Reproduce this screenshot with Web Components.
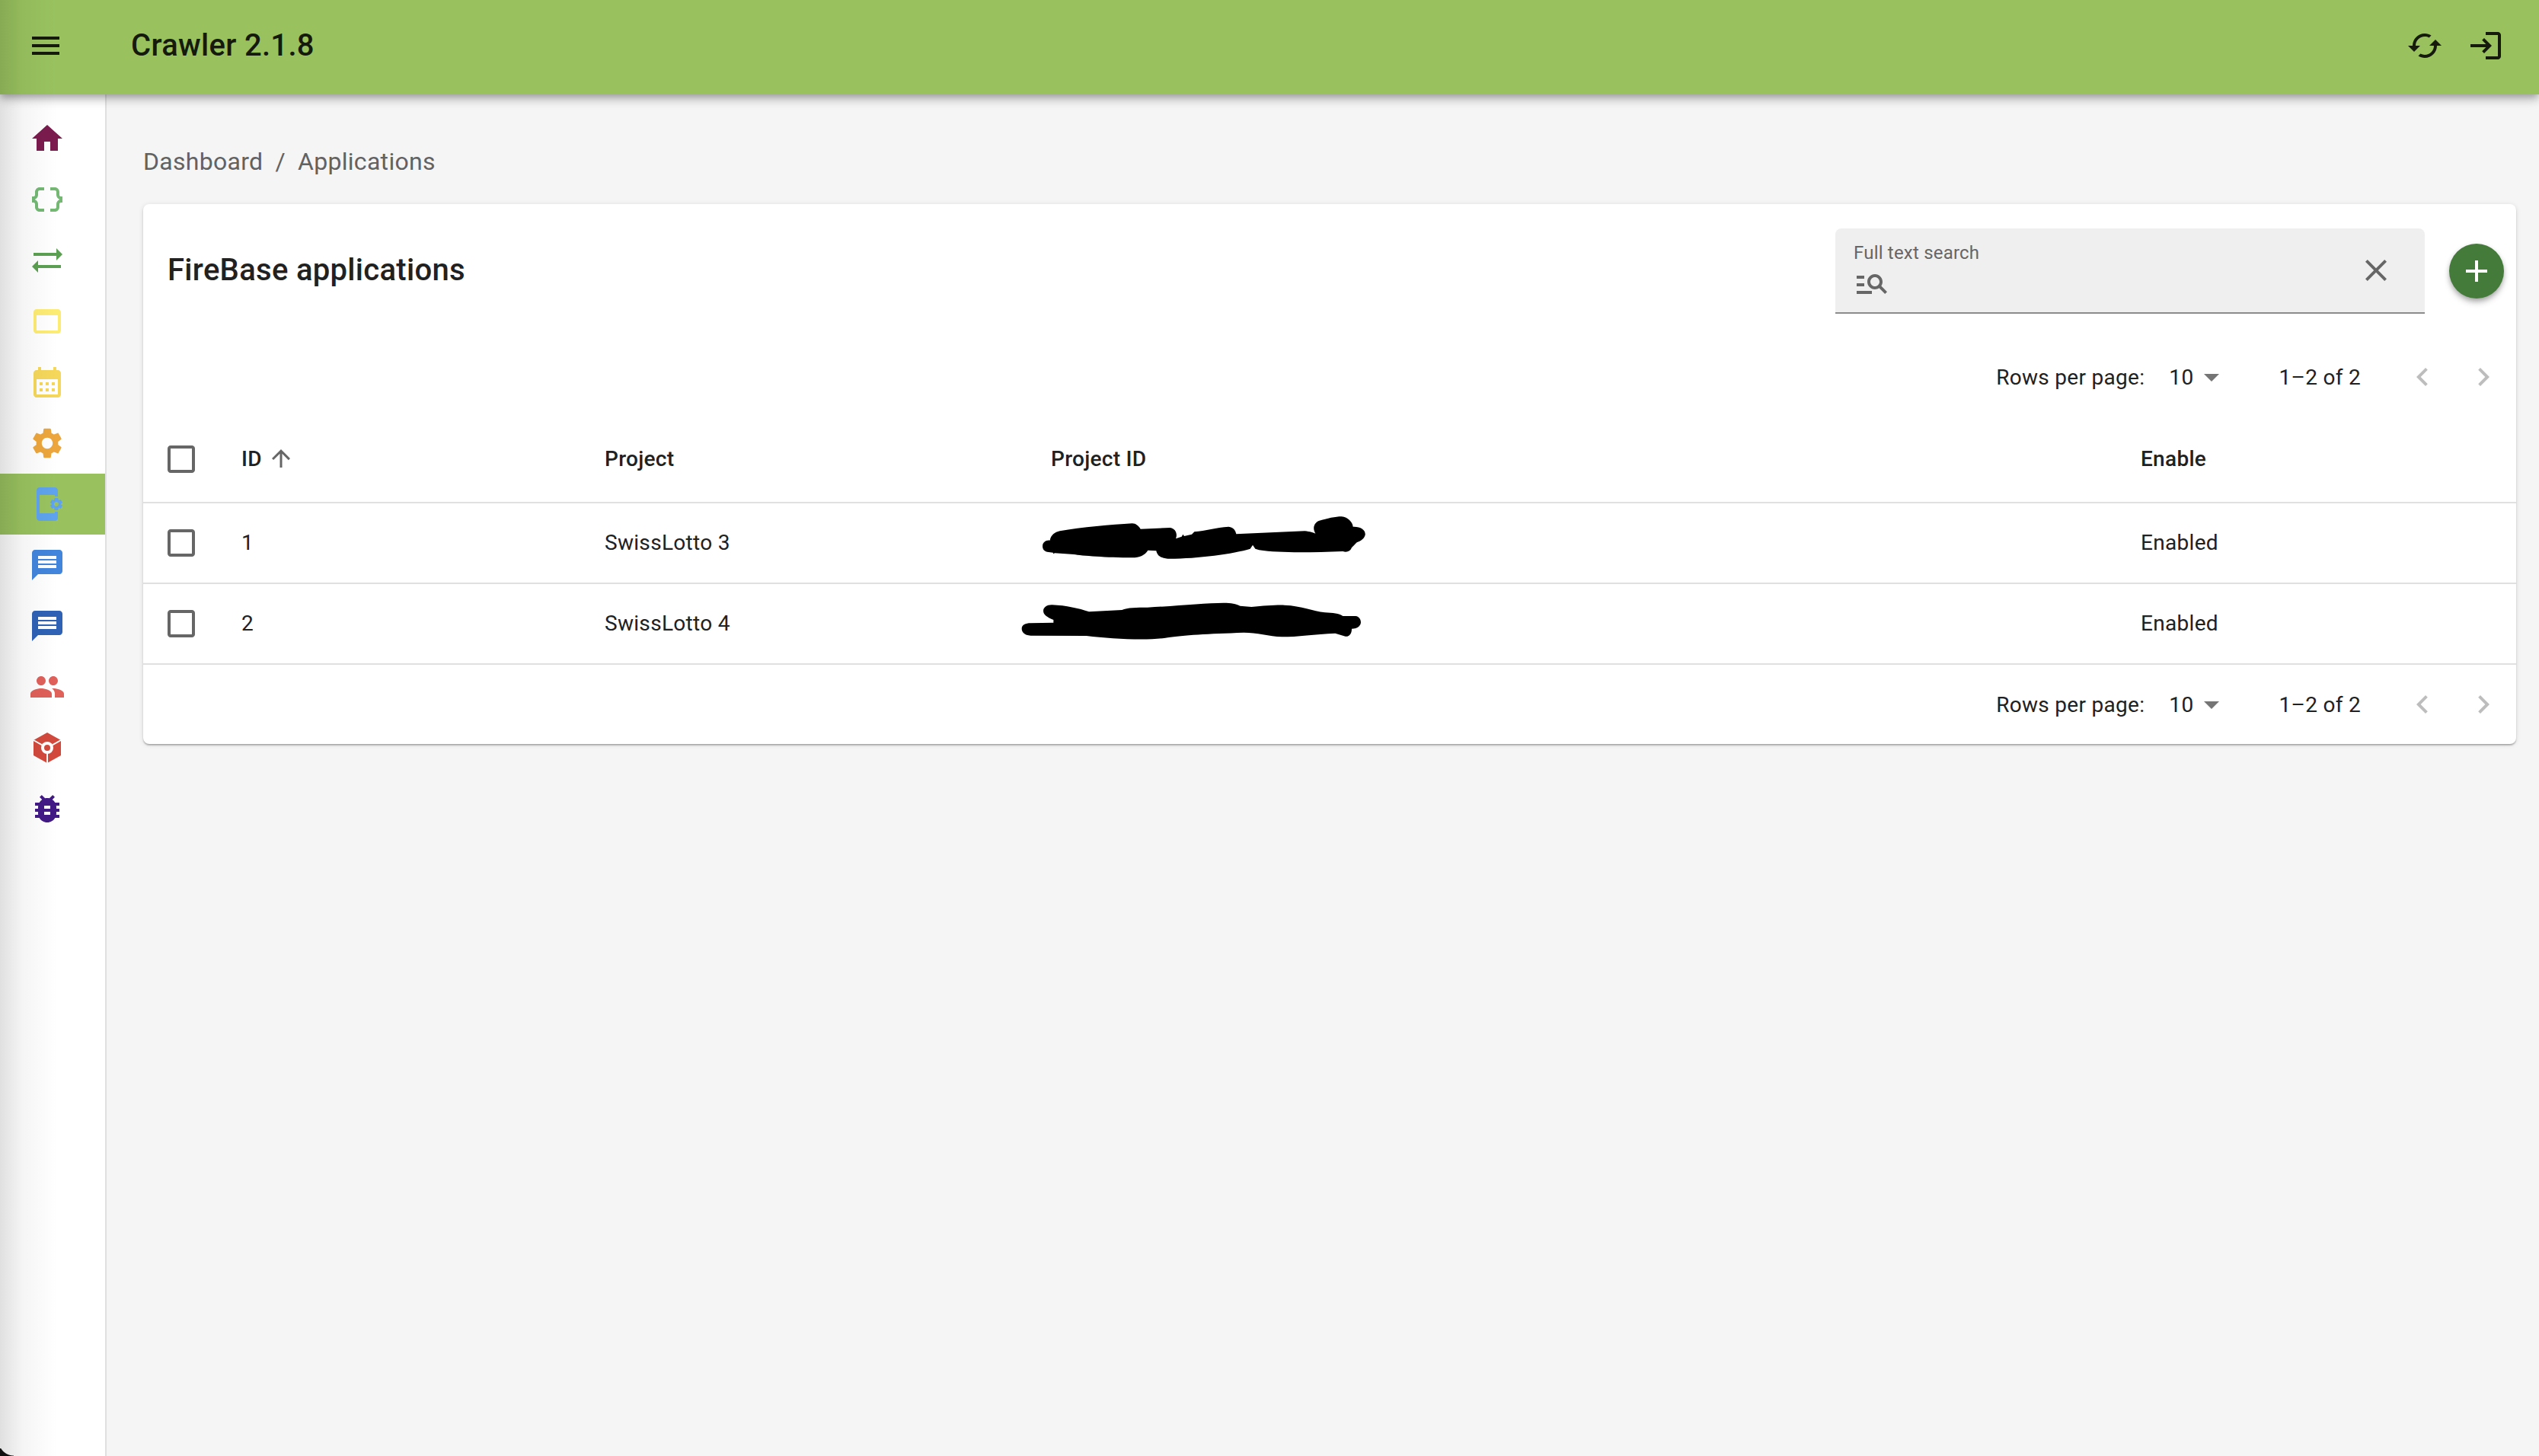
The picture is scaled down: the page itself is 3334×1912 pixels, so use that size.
<!DOCTYPE html>
<html lang="en">
<head>
<meta charset="utf-8">
<title>Crawler</title>
<style>
  html, body { margin: 0; height: 100%; background: #f5f5f5; }
  body { overflow: hidden; font-family: Roboto, "Liberation Sans", sans-serif; }
</style>
</head>
<body>
<crawler-app></crawler-app>
<script>
const ICONS = {
  menu: "M3 18h18v-2H3v2zm0-5h18v-2H3v2zm0-7v2h18V6H3z",
  cached: "m19 8-4 4h3c0 3.31-2.69 6-6 6-1.01 0-1.97-.25-2.8-.7l-1.46 1.46C8.97 19.54 10.43 20 12 20c4.42 0 8-3.58 8-8h3l-4-4zM6 12c0-3.31 2.69-6 6-6 1.01 0 1.97.25 2.8.7l1.46-1.46C15.03 4.46 13.57 4 12 4c-4.42 0-8 3.58-8 8H1l4 4 4-4H6z",
  login: "M11 7 9.6 8.4l2.6 2.6H2v2h10.2l-2.6 2.6L11 17l5-5-5-5zm9 12h-8v2h8c1.1 0 2-.9 2-2V5c0-1.1-.9-2-2-2h-8v2h8v14z",
  home: "M10 20v-6h4v6h5v-8h3L12 3 2 12h3v8z",
  braces: "M4 7v2c0 .55-.45 1-1 1H2v4h1c.55 0 1 .45 1 1v2c0 1.65 1.35 3 3 3h3v-2H7c-.55 0-1-.45-1-1v-2c0-1.3-.84-2.42-2-2.83v-.34C5.16 11.42 6 10.3 6 9V7c0-.55.45-1 1-1h3V4H7C5.35 4 4 5.35 4 7zm17 3c-.55 0-1-.45-1-1V7c0-1.65-1.35-3-3-3h-3v2h3c.55 0 1 .45 1 1v2c0 1.3.84 2.42 2 2.83v.34c-1.16.41-2 1.52-2 2.83v2c0 .55-.45 1-1 1h-3v2h3c1.65 0 3-1.35 3-3v-2c0-.55.45-1 1-1h1v-4h-1z",
  swap: "M22 8l-4-4v3H3v2h15v3l4-4zM2 16l4 4v-3h15v-2H6v-3l-4 4z",
  web: "M19 4H5c-1.11 0-2 .9-2 2v12c0 1.1.89 2 2 2h14c1.1 0 2-.9 2-2V6c0-1.1-.89-2-2-2zm0 14H5V8h14v10z",
  calendar: "M19 4h-1V2h-2v2H8V2H6v2H5c-1.1 0-2 .9-2 2v14c0 1.1.9 2 2 2h14c1.1 0 2-.9 2-2V6c0-1.1-.9-2-2-2zm0 16H5V10h14v10zM7 12h2v2H7zm4 0h2v2h-2zm4 0h2v2h-2zM7 16h2v2H7zm4 0h2v2h-2zm4 0h2v2h-2z",
  settings: "M19.14 12.94c.04-.3.06-.61.06-.94 0-.32-.02-.64-.07-.94l2.03-1.58c.18-.14.23-.41.12-.61l-1.92-3.32c-.12-.22-.37-.29-.59-.22l-2.39.96c-.5-.38-1.03-.7-1.62-.94l-.36-2.54c-.04-.24-.24-.41-.48-.41h-3.84c-.24 0-.43.17-.47.41l-.36 2.54c-.59.24-1.13.57-1.62.94l-2.39-.96c-.22-.08-.47 0-.59.22L2.74 8.87c-.12.21-.08.47.12.61l2.03 1.58c-.05.3-.09.63-.09.94s.02.64.07.94l-2.03 1.58c-.18.14-.23.41-.12.61l1.92 3.32c.12.22.37.29.59.22l2.39-.96c.5.38 1.03.7 1.62.94l.36 2.54c.05.24.24.41.48.41h3.84c.24 0 .44-.17.47-.41l.36-2.54c.59-.24 1.13-.56 1.62-.94l2.39.96c.22.08.47 0 .59-.22l1.92-3.32c.12-.22.07-.47-.12-.61l-2.01-1.58zM12 15.6c-1.98 0-3.6-1.62-3.6-3.6s1.62-3.6 3.6-3.6 3.6 1.62 3.6 3.6-1.62 3.6-3.6 3.6z",
  appsettings: "M21.81 12.74l-.82-.63v-.22l.8-.63c.16-.12.2-.34.1-.51l-.85-1.48c-.07-.13-.21-.2-.35-.2-.05 0-.1.01-.15.03l-.95.38c-.08-.05-.11-.07-.19-.11l-.15-1.01c-.03-.21-.2-.36-.4-.36h-1.71c-.2 0-.37.15-.4.34l-.14 1.01c-.03.02-.07.03-.1.05l-.09.06-.95-.38c-.05-.02-.1-.03-.15-.03-.14 0-.27.07-.35.2l-.85 1.48c-.1.17-.06.39.1.51l.8.63v.23l-.8.63c-.16.12-.2.34-.1.51l.85 1.48c.07.13.21.2.35.2.05 0 .1-.01.15-.03l.95-.37c.08.05.12.07.2.11l.15 1.01c.03.2.2.34.4.34h1.71c.2 0 .37-.15.4-.34l.15-1.01c.03-.02.07-.03.1-.05l.09-.06.95.38c.05.02.1.03.15.03.14 0 .27-.07.35-.2l.85-1.48c.1-.17.06-.39-.1-.51zM18 13.5c-.83 0-1.5-.67-1.5-1.5s.67-1.5 1.5-1.5 1.5.67 1.5 1.5-.67 1.5-1.5 1.5zM17 18H7V6h10v1h2V3c0-1.1-.9-2-2-2H7c-1.1 0-2 .9-2 2v18c0 1.1.9 2 2 2h10c1.1 0 2-.9 2-2v-4h-2v1z",
  message: "M20 2H4c-1.1 0-1.99.9-1.99 2L2 22l4-4h14c1.1 0 2-.9 2-2V4c0-1.1-.9-2-2-2zm-2 12H6v-2h12v2zm0-3H6V9h12v2zm0-3H6V6h12v2z",
  people: "M16 11c1.66 0 2.99-1.34 2.99-3S17.66 5 16 5c-1.66 0-3 1.34-3 3s1.34 3 3 3zm-8 0c1.66 0 2.99-1.34 2.99-3S9.66 5 8 5C6.34 5 5 6.34 5 8s1.34 3 3 3zm0 2c-2.33 0-7 1.17-7 3.5V19h14v-2.5c0-2.33-4.67-3.5-7-3.5zm8 0c-.29 0-.62.02-.97.05 1.16.84 1.97 1.97 1.97 3.45V19h6v-2.5c0-2.33-4.67-3.5-7-3.5z",
  bug: "M20 8h-2.81c-.45-.78-1.07-1.45-1.82-1.96L17 4.41 15.59 3l-2.17 2.17C12.96 5.06 12.49 5 12 5c-.49 0-.96.06-1.41.17L8.41 3 7 4.41l1.62 1.63C7.88 6.55 7.26 7.22 6.81 8H4v2h2.09c-.05.33-.09.66-.09 1v1H4v2h2v1c0 .34.04.67.09 1H4v2h2.81c1.04 1.79 2.97 3 5.19 3s4.15-1.21 5.19-3H20v-2h-2.09c.05-.33.09-.66.09-1v-1h2v-2h-2v-1c0-.34-.04-.67-.09-1H20V8zm-6 8h-4v-2h4v2zm0-4h-4v-2h4v2z",
  search: "M7 9H2V7h5v2zm0 3H2v2h5v-2zm13.59 7-3.83-3.83c-.8.52-1.74.83-2.76.83-2.76 0-5-2.24-5-5s2.24-5 5-5 5 2.24 5 5c0 1.02-.31 1.96-.83 2.75L22 17.59 20.59 19zM17 11c0-1.65-1.35-3-3-3s-3 1.35-3 3 1.35 3 3 3 3-1.35 3-3zM2 19h10v-2H2v2z",
  close: "M19 6.41 17.59 5 12 10.59 6.41 5 5 6.41 10.59 12 5 17.59 6.41 19 12 13.41 17.59 19 19 17.59 13.41 12z",
  add: "M19 13h-6v6h-2v-6H5v-2h6V5h2v6h6v2z",
  checkbox: "M19 5v14H5V5h14m0-2H5c-1.1 0-2 .9-2 2v14c0 1.1.9 2 2 2h14c1.1 0 2-.9 2-2V5c0-1.1-.9-2-2-2z",
  arrowup: "M4 12l1.41 1.41L11 7.83V20h2V7.83l5.58 5.59L20 12l-8-8-8 8z",
  dropdown: "M7 10l5 5 5-5z",
  prev: "M15.41 7.41 14 6l-6 6 6 6 1.41-1.41L10.83 12z",
  next: "M10 6 8.59 7.41 13.17 12l-4.58 4.59L10 18l6-6z",
};

customElements.define(
  "app-icon",
  class extends HTMLElement {
    constructor() {
      super();
      this.attachShadow({ mode: "open" });
    }

    connectedCallback() {
      const name = this.getAttribute("name");
      // the box icon has white spokes, so it is not a single path
      const inner =
        name === "cube"
          ? `<path fill="currentColor" d="M12 2l9 5v10l-9 5-9-5V7z"/>
             <path d="M3 7l9 5 9-5M12 12v10" stroke="#fff" fill="none"/>
             <circle cx="12" cy="12" r="4" fill="#fff"/>
             <circle cx="12" cy="12" r="2" fill="currentColor"/>`
          : `<path fill="currentColor" d="${ICONS[name]}"/>`;
      this.shadowRoot.innerHTML = `
        <style>
          :host {
            display: block;
            flex: none;
            width: var(--icon-size, 48px);
            height: var(--icon-size, 48px);
          }
          svg {
            display: block;
            width: 100%;
            height: 100%;
          }
        </style>
        <svg viewBox="0 0 24 24">${inner}</svg>
      `;
    }
  }
);

customElements.define(
  "app-bar",
  class extends HTMLElement {
    constructor() {
      super();
      this.attachShadow({ mode: "open" });
      this.shadowRoot.innerHTML = `
        <style>
          :host {
            display: flex;
            align-items: center;
            flex: none;
            position: relative;
            z-index: 2;
            box-sizing: border-box;
            height: 124px;
            padding: 0 30px 4px 36px;
            background: #99c25f;
            color: #151a0c;
            box-shadow: 0 4px 8px -2px rgba(0, 0, 0, 0.2),
              0 8px 10px 0 rgba(0, 0, 0, 0.14), 0 2px 20px 0 rgba(0, 0, 0, 0.12);
          }
          h1 {
            margin: 0 0 0 88px;
            flex: 1;
            font-size: 40px;
            font-weight: 500;
            line-height: 1.6;
            letter-spacing: 0.3px;
          }
          .actions {
            display: flex;
            gap: 32px;
            margin-right: 16px;
          }
        </style>
        <app-icon name="menu"></app-icon>
        <h1><slot></slot></h1>
        <div class="actions">
          <app-icon name="cached"></app-icon>
          <app-icon name="login"></app-icon>
        </div>
      `;
    }
  }
);

customElements.define(
  "nav-item",
  class extends HTMLElement {
    constructor() {
      super();
      this.attachShadow({ mode: "open" });
      this.shadowRoot.innerHTML = `
        <style>
          :host {
            display: flex;
            align-items: center;
            height: 80px;
            padding-left: 38px;
          }
          :host([active]) {
            background: #99c25f;
          }
        </style>
        <slot></slot>
      `;
    }
  }
);

customElements.define(
  "side-nav",
  class extends HTMLElement {
    constructor() {
      super();
      this.attachShadow({ mode: "open" });
      this.shadowRoot.innerHTML = `
        <style>
          :host {
            display: block;
            flex: none;
            box-sizing: border-box;
            width: 140px;
            padding-top: 18px;
            background: #fff;
            border-right: 2px solid #e0e0e0;
          }
        </style>
        <nav-item style="color:#7b1b4e"><app-icon name="home"></app-icon></nav-item>
        <nav-item style="color:#74b874"><app-icon name="braces"></app-icon></nav-item>
        <nav-item style="color:#5ba052"><app-icon name="swap"></app-icon></nav-item>
        <nav-item style="color:#fdec74"><app-icon name="web"></app-icon></nav-item>
        <nav-item style="color:#f5d75b"><app-icon name="calendar"></app-icon></nav-item>
        <nav-item style="color:#eda63d"><app-icon name="settings"></app-icon></nav-item>
        <nav-item active style="color:#5fa3ee"><app-icon name="appsettings"></app-icon></nav-item>
        <nav-item style="color:#4285dc"><app-icon name="message"></app-icon></nav-item>
        <nav-item style="color:#2f62b5"><app-icon name="message"></app-icon></nav-item>
        <nav-item style="color:#e0605a"><app-icon name="people"></app-icon></nav-item>
        <nav-item style="color:#d2493c"><app-icon name="cube"></app-icon></nav-item>
        <nav-item style="color:#421a85"><app-icon name="bug"></app-icon></nav-item>
      `;
    }
  }
);

customElements.define(
  "bread-crumbs",
  class extends HTMLElement {
    constructor() {
      super();
      this.attachShadow({ mode: "open" });
      this.shadowRoot.innerHTML = `
        <style>
          :host {
            display: flex;
            gap: 16px;
            align-items: center;
            height: 40px;
            margin-bottom: 36px;
            font-size: 32px;
            letter-spacing: 0.3px;
            color: #626262;
          }
        </style>
        <span>Dashboard</span><span>/</span><span>Applications</span>
      `;
    }
  }
);

customElements.define(
  "search-field",
  class extends HTMLElement {
    constructor() {
      super();
      this.attachShadow({ mode: "open" });
      this.shadowRoot.innerHTML = `
        <style>
          :host {
            display: flex;
            align-items: center;
            box-sizing: border-box;
            width: 774px;
            height: 112px;
            padding: 0 40px 0 24px;
            background: #efefef;
            border-radius: 8px 8px 0 0;
            border-bottom: 2px solid #8c8c8c;
            color: #666;
          }
          .field {
            flex: 1;
            padding-top: 6px;
          }
          label {
            display: block;
            font-size: 24px;
            line-height: 24px;
            margin-bottom: 4px;
            letter-spacing: 0.2px;
          }
        </style>
        <div class="field">
          <label>Full text search</label>
          <app-icon name="search"></app-icon>
        </div>
        <app-icon name="close"></app-icon>
      `;
    }
  }
);

customElements.define(
  "add-fab",
  class extends HTMLElement {
    constructor() {
      super();
      this.attachShadow({ mode: "open" });
      this.shadowRoot.innerHTML = `
        <style>
          :host {
            display: flex;
            align-items: center;
            justify-content: center;
            flex: none;
            width: 72px;
            height: 72px;
            border-radius: 50%;
            background: #447a3a;
            color: #fff;
            box-shadow: 0 6px 10px -2px rgba(0, 0, 0, 0.3),
              0 2px 6px rgba(0, 0, 0, 0.15);
          }
        </style>
        <app-icon name="add"></app-icon>
      `;
    }
  }
);

customElements.define(
  "table-pagination",
  class extends HTMLElement {
    constructor() {
      super();
      this.attachShadow({ mode: "open" });
      this.shadowRoot.innerHTML = `
        <style>
          :host {
            display: flex;
            align-items: center;
            justify-content: flex-end;
            box-sizing: border-box;
            height: 104px;
            padding-right: 19px;
            font-size: 28px;
            letter-spacing: 0.3px;
            color: #212121;
          }
          .size {
            margin-left: 32px;
          }
          .caret {
            color: #757575;
            margin-right: 64px;
          }
          .range {
            margin-right: 57px;
          }
          .pager {
            display: flex;
            gap: 32px;
            color: #bdbdbd;
          }
        </style>
        <span>Rows per page:</span>
        <span class="size">10</span>
        <app-icon class="caret" name="dropdown"></app-icon>
        <span class="range">1–2 of 2</span>
        <div class="pager">
          <app-icon name="prev"></app-icon>
          <app-icon name="next"></app-icon>
        </div>
      `;
    }
  }
);

customElements.define(
  "table-row",
  class extends HTMLElement {
    constructor() {
      super();
      this.attachShadow({ mode: "open" });
      this.shadowRoot.innerHTML = `
        <style>
          :host {
            display: grid;
            grid-template-columns: 103px 477px 586px 1431px 1fr;
            align-items: center;
            box-sizing: border-box;
            height: 106px;
            padding-left: 26px;
            border-bottom: 2px solid #e0e0e0;
            font-size: 28px;
            letter-spacing: 0.3px;
            color: #212121;
          }
          :host([head]) {
            height: 114px;
            font-weight: 500;
          }
          ::slotted(span) {
            margin-bottom: 2px;
          }
          ::slotted(.id) {
            display: flex;
            align-items: center;
          }
        </style>
        <app-icon name="checkbox" style="color:#666"></app-icon>
        <slot></slot>
      `;
    }
  }
);

const BLOBS = {
  1: {
    box: "0 6 1560 318",
    d: "M147 175C147 160 160 150 176 152C180 130 195 120 215 115C300 100 420 90 500 85C515 85 525 95 533 107L650 102C670 105 680 125 672 145L695 137L700 128L705 135L735 128L745 118C790 115 830 100 880 98C900 100 908 115 910 127L1180 115C1200 117 1215 122 1222 125C1210 105 1215 85 1235 75C1270 65 1300 58 1325 58C1350 60 1368 80 1370 98C1400 97 1420 110 1418 130C1415 145 1400 155 1385 160L1365 180C1360 195 1345 200 1330 195C1200 200 1080 202 1000 190L985 185L975 170L965 185C900 205 750 225 640 224C610 222 598 210 595 193L562 191C550 210 530 220 500 220C400 220 300 212 270 207L195 202L190 205L188 200L165 197C152 195 147 185 147 175Z",
  },
  2: {
    box: "0 324 1560 318",
    d: "M150 430C150 415 165 405 185 406C240 408 290 420 330 433L460 426C480 416 520 416 560 416C680 410 790 398 860 398C890 398 910 402 925 410L970 414C1020 410 1060 406 1100 407C1170 410 1210 430 1260 436C1290 437 1315 440 1330 450L1380 450C1398 452 1403 470 1400 480C1395 495 1380 500 1365 500C1365 520 1355 532 1340 530L1300 518C1220 522 1150 532 1090 532C1040 530 990 515 940 515C800 520 700 525 640 535C560 548 420 540 320 528L100 527C75 525 65 512 65 500C65 485 80 478 100 478L190 476L190 465C165 455 150 445 150 430Z",
  },
};

// hand-drawn black scribble over the project id
customElements.define(
  "redact-mark",
  class extends HTMLElement {
    constructor() {
      super();
      this.attachShadow({ mode: "open" });
    }

    connectedCallback() {
      const blob = BLOBS[this.getAttribute("variant")];
      this.shadowRoot.innerHTML = `
        <style>
          :host {
            display: block;
            position: relative;
            align-self: stretch;
          }
          svg {
            position: absolute;
            left: -60px;
            top: 0;
            width: 520px;
            height: 106px;
          }
        </style>
        <svg viewBox="${blob.box}"><path d="${blob.d}"/></svg>
      `;
    }
  }
);

customElements.define(
  "data-card",
  class extends HTMLElement {
    constructor() {
      super();
      this.attachShadow({ mode: "open" });
      this.shadowRoot.innerHTML = `
        <style>
          :host {
            display: block;
            background: #fff;
            border-radius: 8px;
            box-shadow: 0 2px 2px -1px rgba(0, 0, 0, 0.2),
              0 2px 2px 0 rgba(0, 0, 0, 0.14), 0 1px 6px 0 rgba(0, 0, 0, 0.12);
          }
          header {
            display: flex;
            align-items: center;
            gap: 32px;
            height: 112px;
            padding: 32px 16px 31px 32px;
          }
          h2 {
            flex: 1;
            margin: 0 0 3px;
            font-size: 40px;
            font-weight: 500;
            letter-spacing: 0.3px;
            color: #212121;
          }
          .sort {
            --icon-size: 36px;
            color: #666;
            margin-left: 7px;
          }
        </style>
        <header>
          <h2>FireBase applications</h2>
          <search-field></search-field>
          <add-fab></add-fab>
        </header>
        <table-pagination></table-pagination>
        <table-row head>
          <span class="id">ID<app-icon class="sort" name="arrowup"></app-icon></span>
          <span>Project</span>
          <span>Project ID</span>
          <span>Enable</span>
        </table-row>
        <table-row>
          <span>1</span>
          <span>SwissLotto 3</span>
          <redact-mark variant="1"></redact-mark>
          <span>Enabled</span>
        </table-row>
        <table-row>
          <span>2</span>
          <span>SwissLotto 4</span>
          <redact-mark variant="2"></redact-mark>
          <span>Enabled</span>
        </table-row>
        <table-pagination></table-pagination>
      `;
    }
  }
);

customElements.define(
  "crawler-app",
  class extends HTMLElement {
    constructor() {
      super();
      this.attachShadow({ mode: "open" });
      this.shadowRoot.innerHTML = `
        <style>
          :host {
            display: flex;
            flex-direction: column;
            position: relative;
            height: 100vh;
            overflow: hidden;
            background: #f5f5f5;
          }
          .body {
            display: flex;
            flex: 1;
            min-height: 0;
          }
          main {
            flex: 1;
            min-width: 0;
            padding: 68px 30px 0 48px;
          }
          /* soft window shadow along the left edge, and the rounded corner */
          .edge {
            position: absolute;
            inset: 0 auto 0 0;
            z-index: 3;
            width: 80px;
            pointer-events: none;
            background: linear-gradient(
              to right,
              rgba(0, 0, 0, 0.12),
              rgba(0, 0, 0, 0.04) 30px,
              rgba(0, 0, 0, 0) 75px
            );
          }
          .corner {
            position: absolute;
            left: 0;
            bottom: 0;
            z-index: 4;
            width: 18px;
            height: 10px;
            background: radial-gradient(
              circle at 100% -10px,
              transparent 19px,
              #111 20px
            );
          }
        </style>
        <app-bar>Crawler 2.1.8</app-bar>
        <div class="body">
          <side-nav></side-nav>
          <main>
            <bread-crumbs></bread-crumbs>
            <data-card></data-card>
          </main>
        </div>
        <div class="edge"></div>
        <div class="corner"></div>
      `;
    }
  }
);
</script>
</body>
</html>
